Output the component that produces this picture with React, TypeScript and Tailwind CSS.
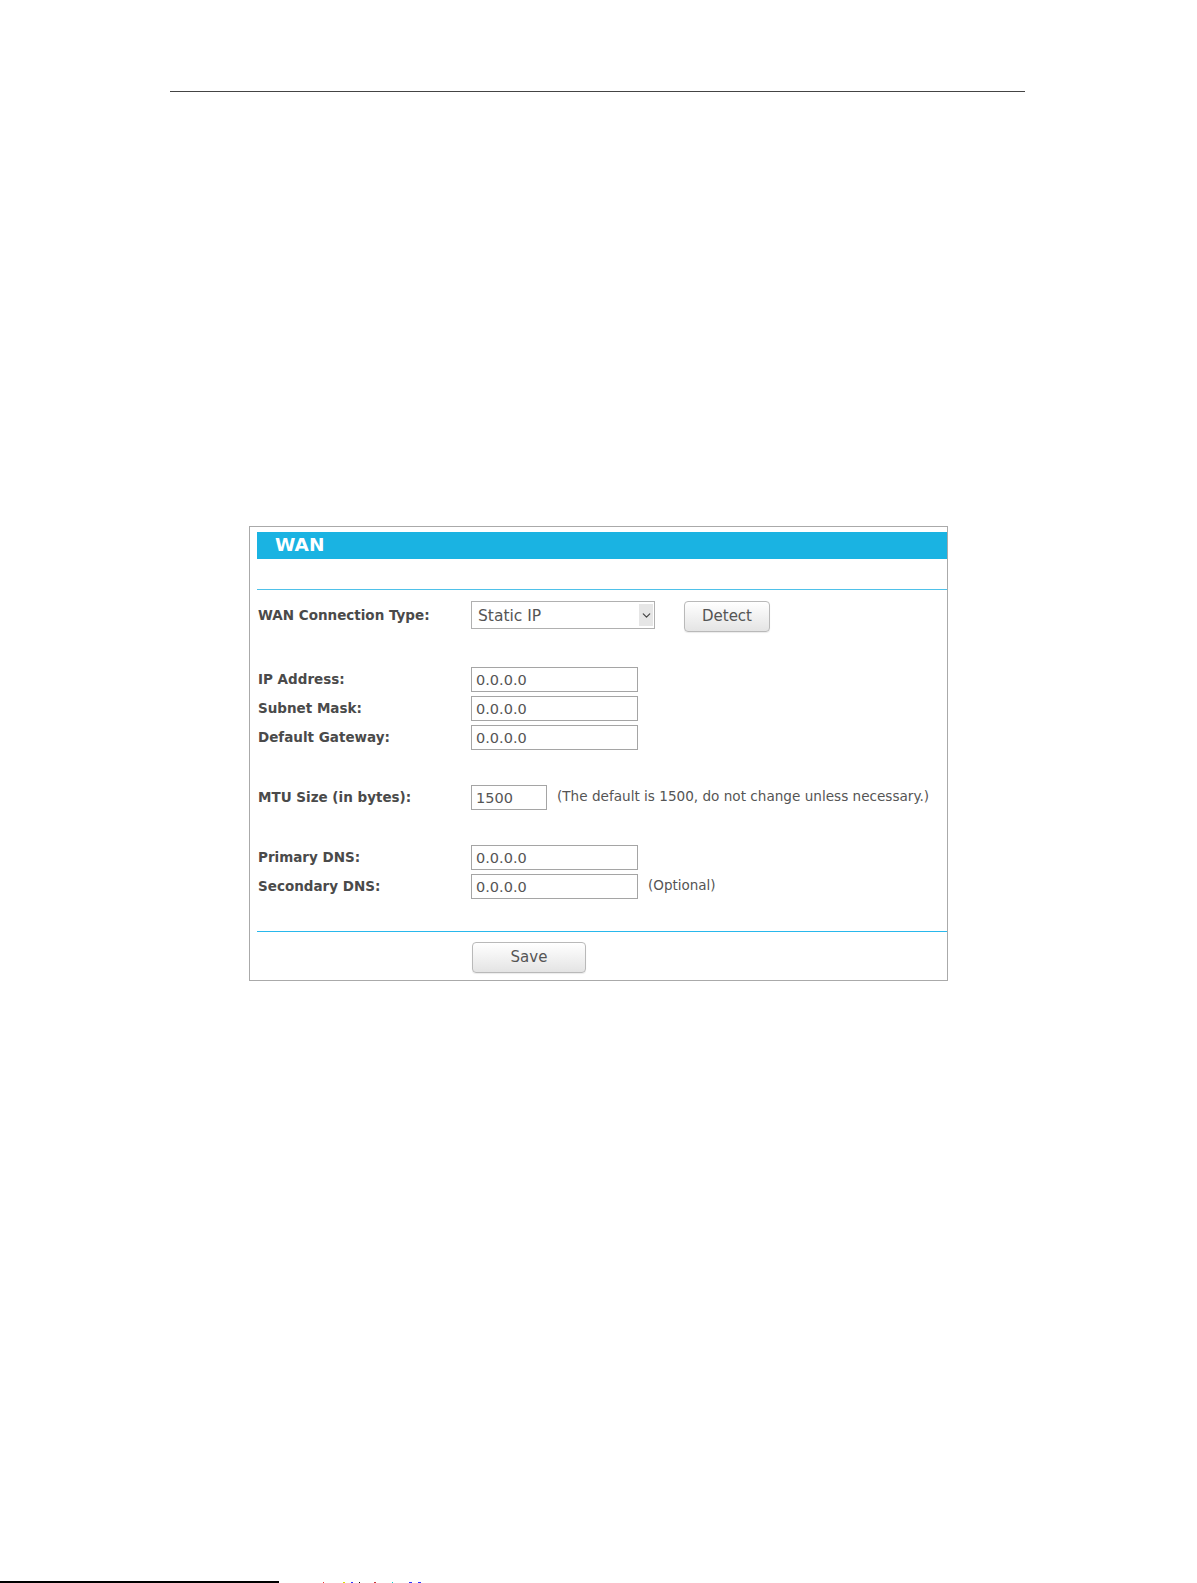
import { ChevronDown } from 'lucide-react';

const fieldFont = "[font-family:'DejaVu_Sans',Verdana,sans-serif]";

const Label = ({ children }: { children: string }) => (
  <div className="w-[213px] shrink-0 text-[13.5px] font-bold text-[#4a4a4a]">{children}</div>
);

const TextBox = ({ value, width = 'w-[167px]' }: { value: string; width?: string }) => (
  <div className={`${width} h-[25px] border border-[#a5a5a5] bg-white pl-[4px] pt-[2px] flex items-center text-[14.5px] text-[#555]`}>
    {value}
  </div>
);

const Row = ({ label, children }: { label: string; children: React.ReactNode }) => (
  <div className="flex items-center h-[25px] pl-px">
    <Label>{label}</Label>
    {children}
  </div>
);

const GreyButton = ({ text, className }: { text: string; className: string }) => (
  <button
    className={`${className} rounded-[4px] border border-[#b9b9b9] bg-gradient-to-b from-white to-[#e4e4e4] text-[15px] text-[#555] shadow-[0_1px_1px_rgba(0,0,0,0.08)]`}
  >
    {text}
  </button>
);

export default function App() {
  return (
    <div className={`min-h-[1583px] bg-white relative ${fieldFont}`}>
      {/* page header rule */}
      <div className="pt-[91px] pl-[170px]">
        <div className="w-[855px] h-px bg-[#444]" />
      </div>

      {/* router screenshot panel */}
      <div className="mt-[434px] ml-[249px] w-[699px] border border-[#aaa] pl-[7px] pt-[5px] pb-[7px]">
        <div className="h-[27px] bg-[#1ab3e2] flex items-center pl-[18px]">
          <span className="text-[18.5px] font-bold text-white leading-none">WAN</span>
        </div>

        <div className="mt-[30px] h-px bg-[#4fc1e9]" />

        <div className="mt-[11px] flex items-start pl-px h-[31px]">
          <div className="h-[28px] flex items-center">
            <Label>WAN Connection Type:</Label>
          </div>
          <div className="w-[184px] h-[28px] border border-[#b0b0b0] bg-white flex items-center justify-between pl-[6px] pr-px">
            <span className="text-[15.5px] text-[#555] pt-[4px]">Static IP</span>
            <span className="w-[14px] h-[22px] bg-[#e6e6e6] flex items-center justify-center">
              <ChevronDown className="w-[13px] h-[13px] text-[#444]" strokeWidth={2.2} />
            </span>
          </div>
          <GreyButton text="Detect" className="ml-[29px] w-[86px] h-[31px]" />
        </div>

        <div className="mt-[35px] flex flex-col gap-[4px]">
          <Row label="IP Address:"><TextBox value="0.0.0.0" /></Row>
          <Row label="Subnet Mask:"><TextBox value="0.0.0.0" /></Row>
          <Row label="Default Gateway:"><TextBox value="0.0.0.0" /></Row>
        </div>

        <div className="mt-[35px]">
          <Row label="MTU Size (in bytes):">
            <TextBox value="1500" width="w-[76px]" />
            <span className="ml-[10px] text-[13.6px] text-[#555] -mt-[3px]">
              (The default is 1500, do not change unless necessary.)
            </span>
          </Row>
        </div>

        <div className="mt-[35px] flex flex-col gap-[4px]">
          <Row label="Primary DNS:"><TextBox value="0.0.0.0" /></Row>
          <Row label="Secondary DNS:">
            <TextBox value="0.0.0.0" />
            <span className="ml-[10px] text-[13.5px] text-[#555] -mt-[3px]">(Optional)</span>
          </Row>
        </div>

        <div className="mt-[32px] h-px bg-[#29b8ec]" />

        <div className="mt-[10px] pl-[215px]">
          <GreyButton text="Save" className="w-[114px] h-[31px]" />
        </div>
      </div>

      {/* cut-off footer rule */}
      <div className="absolute left-0 bottom-0 w-[279px] h-[2px] bg-black" />
      <div className="absolute left-[323px] bottom-0 flex gap-[6px]">
        <span className="w-px h-px bg-[#e33]" />
        <span className="w-[2px] h-px bg-[#dd0] ml-[13px]" />
        <span className="w-[2px] h-px bg-[#33f]" />
        <span className="w-px h-px bg-[#111]" />
        <span className="w-[2px] h-px bg-[#c33] ml-[8px]" />
        <span className="w-px h-px bg-[#0cc] ml-[10px]" />
        <span className="w-[3px] h-px bg-[#33f] ml-[10px]" />
        <span className="w-[3px] h-px bg-[#33f]" />
      </div>
    </div>
  );
}
